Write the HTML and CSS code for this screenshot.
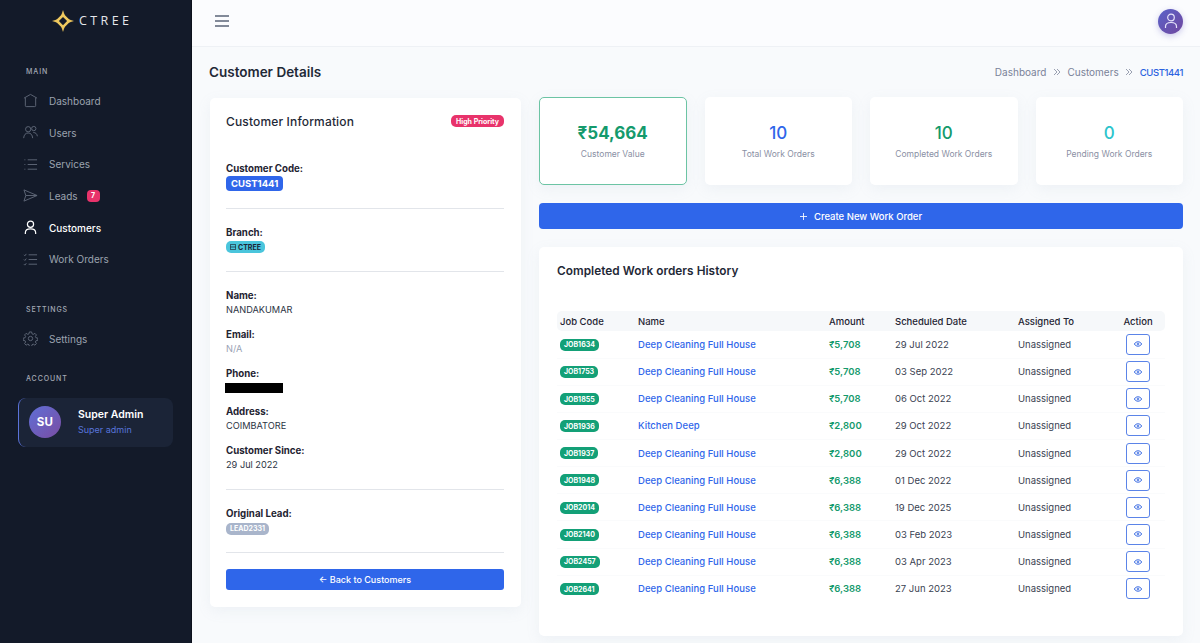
FILE: index.html
```html
<!DOCTYPE html>
<html lang="en">
<head>
<meta charset="utf-8">
<title>Customer Details</title>
<link rel="stylesheet" href="styles.css">
</head>
<body>
<div class="app">
  <aside class="sidebar">
    <div class="logo">
      <svg class="logo-mark" viewBox="0 0 24 24" width="22" height="24"><path d="M12 0 14 6 12 8 10 6ZM12 24 10 18 12 16 14 18ZM0 12 6 10 8 12 6 14ZM24 12 18 14 16 12 18 10Z" fill="#e3bd58"/><path d="M12 3.500 20.500 12 12 20.500 3.500 12ZM12 7.500 7.500 12 12 16.500 16.500 12Z" fill="#efc95f" fill-rule="evenodd"/></svg>
      <span class="logo-text">CTREE</span>
    </div>
    <div class="nav-label nav-label-main">MAIN</div>
    <nav class="nav">
      <a class="nav-item"><svg class="nav-icon" viewBox="0 0 16 16"><path d="M1 5.500 8 1.500 15 5.500M2.500 5v8.500a1 1 0 0 0 1 1h9a1 1 0 0 0 1-1V5"/></svg>Dashboard</a>
      <a class="nav-item"><svg class="nav-icon" viewBox="0 0 16 16"><circle cx="5.500" cy="4.500" r="2.800"/><circle cx="11.500" cy="3.800" r="2.300"/><path d="M.7 14c.3-3.500 2-5.500 4.800-5.500S10 10.500 10.300 14M11 8c2.500 0 4 1.500 4.300 4"/></svg>Users</a>
      <a class="nav-item"><svg class="nav-icon" viewBox="0 0 16 16"><path d="M5 3h10M5 8h10M5 13h10M1.500 3h1M1.500 8h1M1.500 13h1"/></svg>Services</a>
      <a class="nav-item"><svg class="nav-icon" viewBox="0 0 16 16"><path d="M1 2 15 8 1 14 3 8ZM3 8h12"/></svg>Leads<span class="nav-badge">7</span></a>
      <a class="nav-item active"><svg class="nav-icon" viewBox="0 0 16 16"><circle cx="8" cy="4.500" r="3.300"/><path d="M2.500 15v-1.500c0-2.500 2-4 5.500-4s5.500 1.500 5.500 4V15"/></svg>Customers</a>
      <a class="nav-item"><svg class="nav-icon" viewBox="0 0 16 16"><path d="M6 3h9M6 8h9M6 13h9M1 3l1 1 1.500-2M1 8l1 1 1.500-2M1 13l1 1 1.500-2"/></svg>Work Orders</a>
    </nav>
    <div class="nav-label nav-label-settings">SETTINGS</div>
    <a class="nav-item"><svg class="nav-icon" viewBox="0 0 16 16"><circle cx="8" cy="8" r="2.300"/><path d="M6.800 1h2.400l.4 2 1.300.6 1.800-1.100 1.600 1.700-1.100 1.700.6 1.300 2 .4v2.400l-2 .4-.6 1.300 1.100 1.700-1.600 1.700-1.800-1.100-1.300.6-.4 2H6.800l-.4-2-1.300-.6-1.800 1.100-1.600-1.700 1.100-1.700-.6-1.300-2-.4V7.600l2-.4.6-1.300-1.100-1.700 1.600-1.700 1.800 1.100 1.300-.6Z"/></svg>Settings</a>
    <div class="nav-label nav-label-account">ACCOUNT</div>
    <div class="user-card">
      <div class="user-avatar">SU</div>
      <div class="user-meta">
        <div class="user-name">Super Admin</div>
        <div class="user-role">Super admin</div>
      </div>
    </div>
  </aside>

  <div class="main">
    <header class="topbar">
      <svg class="burger" viewBox="0 0 14 12" width="14" height="12"><path d="M0 1h14M0 6h14M0 11h14"/></svg>
      <div class="top-avatar"><svg viewBox="0 0 16 16" width="16" height="16"><circle cx="8" cy="4.500" r="3.300"/><path d="M2.500 15v-1.500c0-2.500 2-4 5.500-4s5.500 1.500 5.500 4V15"/></svg></div>
    </header>

    <main class="content">
      <div class="page-head">
        <h1 class="page-title">Customer Details</h1>
        <div class="crumbs"><span>Dashboard</span><svg class="crumb-sep" viewBox="0 0 8 8" width="8" height="8"><path d="M1 1l3 3-3 3M4 1l3 3-3 3"/></svg><span>Customers</span><svg class="crumb-sep" viewBox="0 0 8 8" width="8" height="8"><path d="M1 1l3 3-3 3M4 1l3 3-3 3"/></svg><span class="crumb-current">CUST1441</span></div>
      </div>

      <div class="columns">
        <section class="card info-card">
          <div class="info-head">
            <h2 class="card-title">Customer Information</h2>
            <span class="pill pill-red">High Priority</span>
          </div>
          <div class="field field-code">
            <div class="field-label">Customer Code:</div>
            <span class="pill-code">CUST1441</span>
          </div>
          <hr class="rule rule-a">
          <div class="field">
            <div class="field-label">Branch:</div>
            <span class="pill pill-cyan"><svg viewBox="0 0 8 8" width="6" height="6"><path d="M.5.5h7v7h-7ZM.5 4h7"/></svg>CTREE</span>
          </div>
          <hr class="rule rule-b">
          <div class="field-list">
            <div class="field"><div class="field-label">Name:</div><div class="field-value">NANDAKUMAR</div></div>
            <div class="field"><div class="field-label">Email:</div><div class="field-value muted">N/A</div></div>
            <div class="field"><div class="field-label">Phone:</div><div class="field-value"><span class="redacted"></span></div></div>
            <div class="field"><div class="field-label">Address:</div><div class="field-value">COIMBATORE</div></div>
            <div class="field"><div class="field-label">Customer Since:</div><div class="field-value">29 Jul 2022</div></div>
          </div>
          <hr class="rule rule-c">
          <div class="field">
            <div class="field-label">Original Lead:</div>
            <span class="pill pill-grey">LEAD2331</span>
          </div>
          <hr class="rule rule-d">
          <button class="btn btn-back">← Back to Customers</button>
        </section>

        <div class="right">
          <div class="stats">
            <div class="card stat stat-green"><div class="stat-num green strong">₹54,664</div><div class="stat-label">Customer Value</div></div>
            <div class="card stat"><div class="stat-num blue">10</div><div class="stat-label">Total Work Orders</div></div>
            <div class="card stat"><div class="stat-num green">10</div><div class="stat-label">Completed Work Orders</div></div>
            <div class="card stat"><div class="stat-num cyan">0</div><div class="stat-label">Pending Work Orders</div></div>
          </div>
          <button class="btn btn-create"><svg viewBox="0 0 10 10" width="7" height="7"><path d="M5 0v10M0 5h10"/></svg>Create New Work Order</button>
          <section class="card history">
            <h2 class="card-title">Completed Work orders History</h2>
            <table class="jobs">
              <thead>
                <tr><th class="c-code">Job Code</th><th class="c-name">Name</th><th class="c-amt">Amount</th><th class="c-date">Scheduled Date</th><th class="c-who">Assigned To</th><th class="c-act">Action</th></tr>
              </thead>
              <tbody>
                <tr><td><span class="job-pill">JOB1634</span></td><td class="job-name">Deep Cleaning Full House</td><td class="job-amt">₹5,708</td><td>29 Jul 2022</td><td>Unassigned</td><td class="c-act"><span class="eye-btn"><svg viewBox="0 0 12 8" width="8" height="6"><path d="M.5 4C2 1.500 4 .7 6 .7s4 .8 5.500 3.300C10 6.500 8 7.300 6 7.300S2 6.500.5 4Z"/><circle cx="6" cy="4" r="1.300"/></svg></span></td></tr>
                <tr><td><span class="job-pill">JOB1753</span></td><td class="job-name">Deep Cleaning Full House</td><td class="job-amt">₹5,708</td><td>03 Sep 2022</td><td>Unassigned</td><td class="c-act"><span class="eye-btn"><svg viewBox="0 0 12 8" width="8" height="6"><path d="M.5 4C2 1.500 4 .7 6 .7s4 .8 5.500 3.300C10 6.500 8 7.300 6 7.300S2 6.500.5 4Z"/><circle cx="6" cy="4" r="1.300"/></svg></span></td></tr>
                <tr><td><span class="job-pill">JOB1855</span></td><td class="job-name">Deep Cleaning Full House</td><td class="job-amt">₹5,708</td><td>06 Oct 2022</td><td>Unassigned</td><td class="c-act"><span class="eye-btn"><svg viewBox="0 0 12 8" width="8" height="6"><path d="M.5 4C2 1.500 4 .7 6 .7s4 .8 5.500 3.300C10 6.500 8 7.300 6 7.300S2 6.500.5 4Z"/><circle cx="6" cy="4" r="1.300"/></svg></span></td></tr>
                <tr><td><span class="job-pill">JOB1936</span></td><td class="job-name">Kitchen Deep</td><td class="job-amt">₹2,800</td><td>29 Oct 2022</td><td>Unassigned</td><td class="c-act"><span class="eye-btn"><svg viewBox="0 0 12 8" width="8" height="6"><path d="M.5 4C2 1.500 4 .7 6 .7s4 .8 5.500 3.300C10 6.500 8 7.300 6 7.300S2 6.500.5 4Z"/><circle cx="6" cy="4" r="1.300"/></svg></span></td></tr>
                <tr><td><span class="job-pill">JOB1937</span></td><td class="job-name">Deep Cleaning Full House</td><td class="job-amt">₹2,800</td><td>29 Oct 2022</td><td>Unassigned</td><td class="c-act"><span class="eye-btn"><svg viewBox="0 0 12 8" width="8" height="6"><path d="M.5 4C2 1.500 4 .7 6 .7s4 .8 5.500 3.300C10 6.500 8 7.300 6 7.300S2 6.500.5 4Z"/><circle cx="6" cy="4" r="1.300"/></svg></span></td></tr>
                <tr><td><span class="job-pill">JOB1948</span></td><td class="job-name">Deep Cleaning Full House</td><td class="job-amt">₹6,388</td><td>01 Dec 2022</td><td>Unassigned</td><td class="c-act"><span class="eye-btn"><svg viewBox="0 0 12 8" width="8" height="6"><path d="M.5 4C2 1.500 4 .7 6 .7s4 .8 5.500 3.300C10 6.500 8 7.300 6 7.300S2 6.500.5 4Z"/><circle cx="6" cy="4" r="1.300"/></svg></span></td></tr>
                <tr><td><span class="job-pill">JOB2014</span></td><td class="job-name">Deep Cleaning Full House</td><td class="job-amt">₹6,388</td><td>19 Dec 2025</td><td>Unassigned</td><td class="c-act"><span class="eye-btn"><svg viewBox="0 0 12 8" width="8" height="6"><path d="M.5 4C2 1.500 4 .7 6 .7s4 .8 5.500 3.300C10 6.500 8 7.300 6 7.300S2 6.500.5 4Z"/><circle cx="6" cy="4" r="1.300"/></svg></span></td></tr>
                <tr><td><span class="job-pill">JOB2140</span></td><td class="job-name">Deep Cleaning Full House</td><td class="job-amt">₹6,388</td><td>03 Feb 2023</td><td>Unassigned</td><td class="c-act"><span class="eye-btn"><svg viewBox="0 0 12 8" width="8" height="6"><path d="M.5 4C2 1.500 4 .7 6 .7s4 .8 5.500 3.300C10 6.500 8 7.300 6 7.300S2 6.500.5 4Z"/><circle cx="6" cy="4" r="1.300"/></svg></span></td></tr>
                <tr><td><span class="job-pill">JOB2457</span></td><td class="job-name">Deep Cleaning Full House</td><td class="job-amt">₹6,388</td><td>03 Apr 2023</td><td>Unassigned</td><td class="c-act"><span class="eye-btn"><svg viewBox="0 0 12 8" width="8" height="6"><path d="M.5 4C2 1.500 4 .7 6 .7s4 .8 5.500 3.300C10 6.500 8 7.300 6 7.300S2 6.500.5 4Z"/><circle cx="6" cy="4" r="1.300"/></svg></span></td></tr>
                <tr><td><span class="job-pill">JOB2641</span></td><td class="job-name">Deep Cleaning Full House</td><td class="job-amt">₹6,388</td><td>27 Jun 2023</td><td>Unassigned</td><td class="c-act"><span class="eye-btn"><svg viewBox="0 0 12 8" width="8" height="6"><path d="M.5 4C2 1.500 4 .7 6 .7s4 .8 5.500 3.300C10 6.500 8 7.300 6 7.300S2 6.500.5 4Z"/><circle cx="6" cy="4" r="1.300"/></svg></span></td></tr>
              </tbody>
            </table>
          </section>
        </div>
      </div>
    </main>
  </div>
</div>
</body>
</html>
```
FILE: styles.css
```css
* { box-sizing: border-box; }
html, body { margin: 0; height: 100%; overflow: hidden; }
body { font-family: Inter, "Noto Sans", sans-serif; font-size: 10px; color: #1f2937; background: #f8fafc; }
.app { display: flex; height: 643px; }

.sidebar { width: 192px; flex: none; background: #131a29; padding: 0 18px; border-right: 1px solid #0c111b; }
.logo { display: flex; align-items: center; gap: 5px; height: 41px; padding-left: 34px; }
.logo-text { font-family: "Open Sans", sans-serif; font-size: 12.500px; font-weight: 400; letter-spacing: 3.400px; color: #e5e7eb; }
.nav-label { font-size: 7px; font-weight: 500; letter-spacing: .9px; color: #a3a9b5; padding-left: 8px; line-height: 10px; }
.nav-label-main { margin-top: 26px; }
.nav-label-settings { margin-top: 30px; }
.nav-label-account { margin-top: 19px; }
.nav { margin-top: 8px; display: flex; flex-direction: column; }
.nav-item { display: flex; align-items: center; height: 31.700px; font-size: 10px; color: #9ca3af; padding-left: 5px; }
.nav-item.active { color: #fff; font-weight: 500; }
.nav-icon { width: 15px; height: 15px; margin-right: 11px; fill: none; stroke: #5f6878; stroke-width: 1; flex: none; }
.active .nav-icon { stroke: #fff; stroke-width: 1.300; }
.nav-badge { margin-left: 9px; background: #e8336b; color: #fff; font-size: 7px; font-weight: 700; width: 13px; height: 12px; border-radius: 4px; display: flex; align-items: center; justify-content: center; }
.nav-label-settings + .nav-item { margin-top: 8px; }
.user-card { margin-top: 14px; height: 49px; width: 155px; background: #1b2437; border-radius: 8px; border-left: 1px solid #5b73d9; display: flex; align-items: center; padding-left: 10px; gap: 17px; }
.user-avatar { width: 32px; height: 32px; border-radius: 50%; background: linear-gradient(135deg, #5f6fd6, #7a4da3); color: #fff; font-size: 11.500px; font-weight: 700; display: flex; align-items: center; justify-content: center; letter-spacing: .4px; }
.user-name { color: #fff; font-size: 10.500px; font-weight: 600; line-height: 15px; }
.user-role { color: #5874db; font-size: 9px; line-height: 15px; }

.main { flex: 1; min-width: 0; display: flex; flex-direction: column; }
.topbar { height: 47px; flex: none; display: flex; align-items: center; justify-content: space-between; padding: 0 17px 0 23px; background: #fbfcfe; border-bottom: 1px solid #eef1f5; }
.burger { fill: none; stroke: #5b6478; stroke-width: 1.300; margin-top: -5px; }
.top-avatar { width: 25px; height: 25px; margin-top: -4px; border-radius: 50%; background: linear-gradient(135deg, #5a63c9, #70479f); display: flex; align-items: center; justify-content: center; box-shadow: 0 2px 6px rgba(90,80,190,.3); }
.top-avatar svg { fill: none; stroke: #e6e4fa; stroke-width: 1.200; }

.content { padding: 0 17px; flex: 1; }
.page-head { display: flex; align-items: center; justify-content: space-between; height: 50px; }
.page-title { margin: 0; font-size: 13.500px; font-weight: 600; color: #1f2937; }
.crumbs { display: flex; align-items: center; gap: 6.500px; font-size: 10px; color: #7a8299; }
.crumb-sep { fill: none; stroke: #8e95a8; stroke-width: .9; }
.crumb-current { color: #2b62e0; font-weight: 500; font-size: 9.500px; letter-spacing: -.4px; }

.columns { display: flex; gap: 18px; align-items: flex-start; }
.card { background: #fff; border-radius: 5px; box-shadow: 0 4px 14px rgba(148,163,184,.1); }
.info-card { width: 311px; height: 509px; margin: 1px 0 0 1px; padding: 0 17px 0 16px; flex: none; }
.info-head { display: flex; align-items: center; justify-content: space-between; padding-top: 15px; height: 31px; }
.card-title { margin: 0; font-size: 12px; font-weight: 500; color: #1f2937; letter-spacing: .15px; }
.pill { display: inline-flex; align-items: center; gap: 2px; height: 12px; padding: 0 4px; border-radius: 5px; font-size: 7px; font-weight: 700; color: #fff; }
.pill-red { background: #e8336b; padding: 0 5px; }
.pill-cyan { background: #4ac5dc; color: #1b2537; }
.pill-cyan svg { fill: none; stroke: #1b2537; stroke-width: 1; }
.pill-grey { background: #a9b5cb; }
.pill-code { display: inline-flex; align-items: center; height: 15px; padding: 0 5px; border-radius: 4px; background: #2f66ea; color: #fff; font-size: 9.500px; font-weight: 700; }
.field-label { font-size: 9.700px; font-weight: 700; color: #1f2432; line-height: 14px; }
.field-value { font-size: 9.200px; color: #2c3444; line-height: 14px; }
.muted { color: #9aa3b5; }
.field-code { margin-top: 33px; }
.field { display: block; }
.field-list .field { height: 38.800px; }
.rule { border: 0; border-top: 1px solid #e2e5ea; margin: 0; }
.rule-a { margin-top: 17px; margin-bottom: 17px; }
.rule-b { margin-top: 18px; margin-bottom: 17px; }
.rule-c { margin-top: 6.500px; margin-bottom: 17px; }
.rule-d { margin-top: 17px; margin-bottom: 16px; }
.redacted { display: block; width: 58px; height: 10px; background: #000; margin-left: -1px; margin-top: 2px; }
.btn { display: flex; align-items: center; justify-content: center; width: 100%; border: 0; color: #fff; background: #2f66ea; font-family: inherit; border-radius: 3px; font-size: 9.500px; font-weight: 500; padding: 0; }
.btn-back { height: 21px; font-size: 9px; }
.btn-create { height: 26px; gap: 7px; margin-top: 18px; border-radius: 4px; }
.btn-create svg { fill: none; stroke: #fff; stroke-width: 1.200; }

.right { flex: 1; min-width: 0; }
.stats { display: grid; grid-template-columns: repeat(4, 1fr); gap: 18px; }
.stat { height: 88px; text-align: center; padding-top: 25px; }
.stat-green { border: 1px solid #6cc4a4; padding-top: 24px; }
.stat-num { font-size: 17px; line-height: 22px; font-weight: 500; }
.strong { font-weight: 700; }
.green { color: #149a6c; }
.blue { color: #2f66ea; }
.cyan { color: #2cc4cc; }
.stat-label { font-size: 8.500px; color: #8a90a4; line-height: 14px; margin-top: 3px; }

.history { margin-top: 18px; height: 389px; padding: 16px 18px 0; }
.history .card-title { line-height: 16px; font-size: 11.800px; font-weight: 600; letter-spacing: .05px; }
.jobs { margin-top: 32px; width: 100%; border-collapse: collapse; table-layout: fixed; font-size: 9.500px; }
.jobs th { height: 20px; background: #f6f8fa; font-weight: 500; text-align: left; color: #1f2432; padding: 0 0 0 3px; }
.jobs th:first-child { border-radius: 5px 0 0 5px; }
.jobs th:last-child { border-radius: 0 5px 5px 0; }
.jobs td { height: 27.130px; padding: 0 0 0 3px; border-bottom: 1px solid #fafbfc; color: #3a4252; }
.jobs tr:last-child td { border-bottom: 0; }
.c-code { width: 78px; }
.c-name { width: 191px; }
.c-amt { width: 66px; }
.c-date { width: 123px; }
.c-who { width: 103px; }
.jobs .c-act { text-align: center; padding: 0 7px 0 0; }
.job-pill { display: inline-flex; align-items: center; height: 12px; padding: 0 4px; border-radius: 5px; background: #13a077; color: #fff; font-size: 7px; font-weight: 700; }
.jobs .job-name { color: #2f66ea; font-weight: 500; letter-spacing: .05px; }
.jobs .job-amt { color: #149a6c; font-weight: 600; }
.eye-btn { display: inline-flex; width: 24px; height: 21px; align-items: center; justify-content: center; border: 1px solid #5b84e8; border-radius: 3px; vertical-align: middle; }
.eye-btn svg { fill: none; stroke: #3f6fe3; stroke-width: 1.500; }
```
